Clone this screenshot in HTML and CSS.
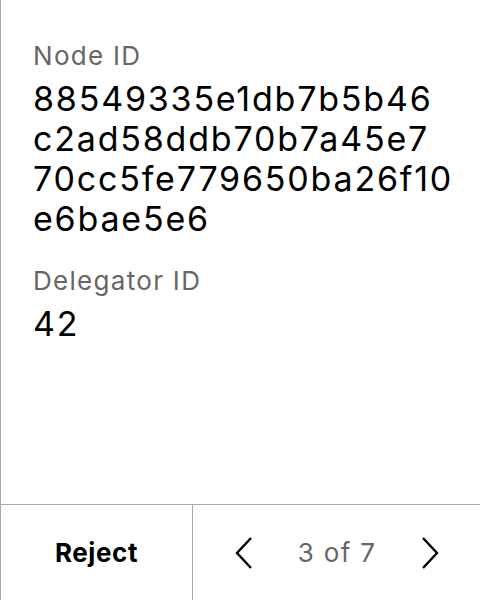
FILE: index.html
```html
<!DOCTYPE html>
<html>
<head>
<meta charset="utf-8">
<link rel="stylesheet" href="styles.css">
</head>
<body>
<div class="screen">
  <main class="content">
    <section class="field">
      <div class="label">Node ID</div>
      <div class="value">88549335e1db7b5b46<br>c2ad58ddb70b7a45e7<br>70cc5fe779650ba26f10<br>e6bae5e6</div>
    </section>
    <section class="field">
      <div class="label">Delegator ID</div>
      <div class="value">42</div>
    </section>
  </main>
  <footer class="bar">
    <div class="reject">Reject</div>
    <div class="pager">
      <svg class="chev" width="18" height="32" viewBox="0 0 18 32"><path d="M16 1 L2 16 L16 31" fill="none" stroke="#000" stroke-width="2.4"/></svg>
      <span class="count">3 of 7</span>
      <svg class="chev" width="18" height="32" viewBox="0 0 18 32"><path d="M2 1 L16 16 L2 31" fill="none" stroke="#000" stroke-width="2.4"/></svg>
    </div>
  </footer>
</div>
</body>
</html>
```
FILE: styles.css
```css
html, body { margin: 0; padding: 0; background: #fff; }
body { font-family: Inter, "Noto Sans", sans-serif; color: #000; }
.screen {
  width: 480px; height: 600px; box-sizing: border-box;
  border-left: 1px solid #aaa;
  display: flex; flex-direction: column;
}
.content { flex: 1; padding: 40px 0 0 32px; display: flex; flex-direction: column; gap: 26px; }
.field { display: flex; flex-direction: column; gap: 7px; }
.label { font-size: 26px; color: #666; line-height: 32px; letter-spacing: 1.3px; }
.value { font-size: 34px; line-height: 40px; letter-spacing: 1.8px; white-space: nowrap; }
.bar { height: 96px; box-sizing: border-box; border-top: 1px solid #aaa; display: flex; }
.reject { width: 191px; border-right: 1px solid #aaa; display: flex; align-items: center; justify-content: center; font-size: 26px; font-weight: 700; letter-spacing: 0.6px; }
.pager { flex: 1; display: flex; align-items: center; justify-content: space-between; padding: 0 41px 0 42px; }
.count { font-size: 26px; color: #666; letter-spacing: 1.3px; }
.chev { display: block; }
```
